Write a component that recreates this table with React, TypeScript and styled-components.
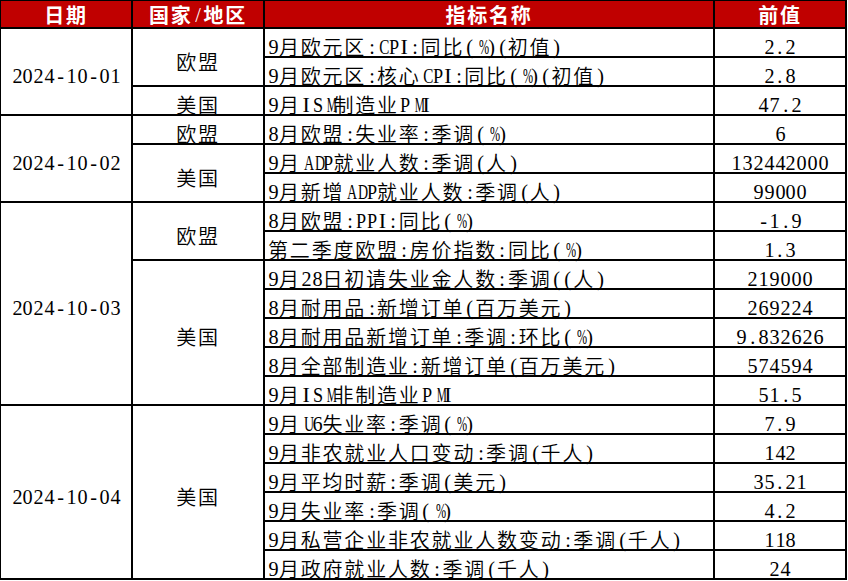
import React from "react";
import styled, { createGlobalStyle } from "styled-components";

const GlobalStyle = createGlobalStyle`
  html, body { margin: 0; padding: 0; background: #ffffff; }
  body { font-family: "Noto Sans CJK SC DemiLight", "Noto Sans CJK SC Light", "Noto Sans CJK SC", "Liberation Serif", serif; }
`;

type Item = [string, string];
type Country = { name: string; items: Item[] };
type Day = { date: string; countries: Country[] };

const data: Day[] = [
  {
    date: "2024-10-01",
    countries: [
      {
        name: "欧盟",
        items: [
          ["9月欧元区:CPI:同比(%)(初值)", "2.2"],
          ["9月欧元区:核心CPI:同比(%)(初值)", "2.8"],
        ],
      },
      { name: "美国", items: [["9月ISM制造业PMI", "47.2"]] },
    ],
  },
  {
    date: "2024-10-02",
    countries: [
      { name: "欧盟", items: [["8月欧盟:失业率:季调(%)", "6"]] },
      {
        name: "美国",
        items: [
          ["9月ADP就业人数:季调(人)", "132442000"],
          ["9月新增ADP就业人数:季调(人)", "99000"],
        ],
      },
    ],
  },
  {
    date: "2024-10-03",
    countries: [
      {
        name: "欧盟",
        items: [
          ["8月欧盟:PPI:同比(%)", "-1.9"],
          ["第二季度欧盟:房价指数:同比(%)", "1.3"],
        ],
      },
      {
        name: "美国",
        items: [
          ["9月28日初请失业金人数:季调((人)", "219000"],
          ["8月耐用品:新增订单(百万美元)", "269224"],
          ["8月耐用品新增订单:季调:环比(%)", "9.832626"],
          ["8月全部制造业:新增订单(百万美元)", "574594"],
          ["9月ISM非制造业PMI", "51.5"],
        ],
      },
    ],
  },
  {
    date: "2024-10-04",
    countries: [
      {
        name: "美国",
        items: [
          ["9月U6失业率:季调(%)", "7.9"],
          ["9月非农就业人口变动:季调(千人)", "142"],
          ["9月平均时薪:季调(美元)", "35.21"],
          ["9月失业率:季调(%)", "4.2"],
          ["9月私营企业非农就业人数变动:季调(千人)", "118"],
          ["9月政府就业人数:季调(千人)", "24"],
        ],
      },
    ],
  },
];

/* approximate Times advance widths (em) of the wide Latin glyphs, used to squeeze them into a half-width cell */
const advance: Record<string, number> = {
  C: 0.667, P: 0.556, I: 0.333, S: 0.556, M: 0.889, A: 0.722, D: 0.722, U: 0.722, "%": 0.833,
};
const HALF = 10.9;
const LATIN_SIZE = 22;

const Table = styled.div`
  display: grid;
  width: max-content;
  grid-template-columns: 130px 130px 448px 130px;
  grid-auto-rows: 27px;
  grid-template-rows: 26px;
  gap: 2px;
  padding: 1px 2px 2px 1px;
  background: #000000;
`;

const HeadCell = styled.div`
  background: #c00000;
  color: #ffffff;
  font-family: "Noto Sans CJK SC", "Liberation Serif", serif;
  font-weight: 700;
  font-size: 20px;
  letter-spacing: 1.8px;
  line-height: 1;
  display: flex;
  align-items: center;
  justify-content: center;
  padding-top: 2px;
  box-sizing: border-box;
  white-space: nowrap;
`;

const Cell = styled.div<{ $span?: number }>`
  background: #ffffff;
  color: #000000;
  font-size: 20px;
  font-weight: 300;
  letter-spacing: 1.8px;
  line-height: 18px;
  display: flex;
  align-items: center;
  box-sizing: border-box;
  padding-top: 9px;
  white-space: nowrap;
  grid-row: span ${(p) => p.$span ?? 1};
`;

const DateCell = styled(Cell)`
  grid-column: 1;
  justify-content: center;
`;

const CountryCell = styled(Cell)`
  grid-column: 2;
  justify-content: center;
`;

const NameCell = styled(Cell)`
  grid-column: 3;
  justify-content: flex-start;
  padding-left: 3px;
`;

const ValueCell = styled(Cell)`
  grid-column: 4;
  justify-content: center;
`;

const Half = styled.span`
  display: inline-block;
  width: ${HALF}px;
  text-align: center;
  font-family: "Liberation Serif", serif;
  font-weight: 400;
  font-size: ${LATIN_SIZE}px;
  line-height: 18px;
  letter-spacing: 0;
`;

const Glyph = styled.span<{ $k: number }>`
  display: inline-block;
  transform: scaleX(${(p) => p.$k});
  transform-origin: center;
`;

const Text: React.FC<{ s: string }> = ({ s }) => (
  <>
    {Array.from(s).map((ch, i) => {
      if (ch.charCodeAt(0) >= 128) return <React.Fragment key={i}>{ch}</React.Fragment>;
      const w = (advance[ch] ?? 0.5) * LATIN_SIZE;
      const k = Math.min(1, (HALF - 0.8) / w);
      return (
        <Half key={i}>
          <Glyph $k={k}>{ch}</Glyph>
        </Half>
      );
    })}
  </>
);

export default function App() {
  return (
    <>
      <GlobalStyle />
      <Table>
        <HeadCell>日期</HeadCell>
        <HeadCell>
          <Text s="国家/地区" />
        </HeadCell>
        <HeadCell>指标名称</HeadCell>
        <HeadCell>前值</HeadCell>
        {data.map((day) => {
          const total = day.countries.reduce((n, c) => n + c.items.length, 0);
          return (
            <React.Fragment key={day.date}>
              <DateCell $span={total}>
                <Text s={day.date} />
              </DateCell>
              {day.countries.map((c) => (
                <React.Fragment key={c.name}>
                  <CountryCell $span={c.items.length}>{c.name}</CountryCell>
                  {c.items.map(([name, value]) => (
                    <React.Fragment key={name}>
                      <NameCell>
                        <Text s={name} />
                      </NameCell>
                      <ValueCell>
                        <Text s={value} />
                      </ValueCell>
                    </React.Fragment>
                  ))}
                </React.Fragment>
              ))}
            </React.Fragment>
          );
        })}
      </Table>
    </>
  );
}
